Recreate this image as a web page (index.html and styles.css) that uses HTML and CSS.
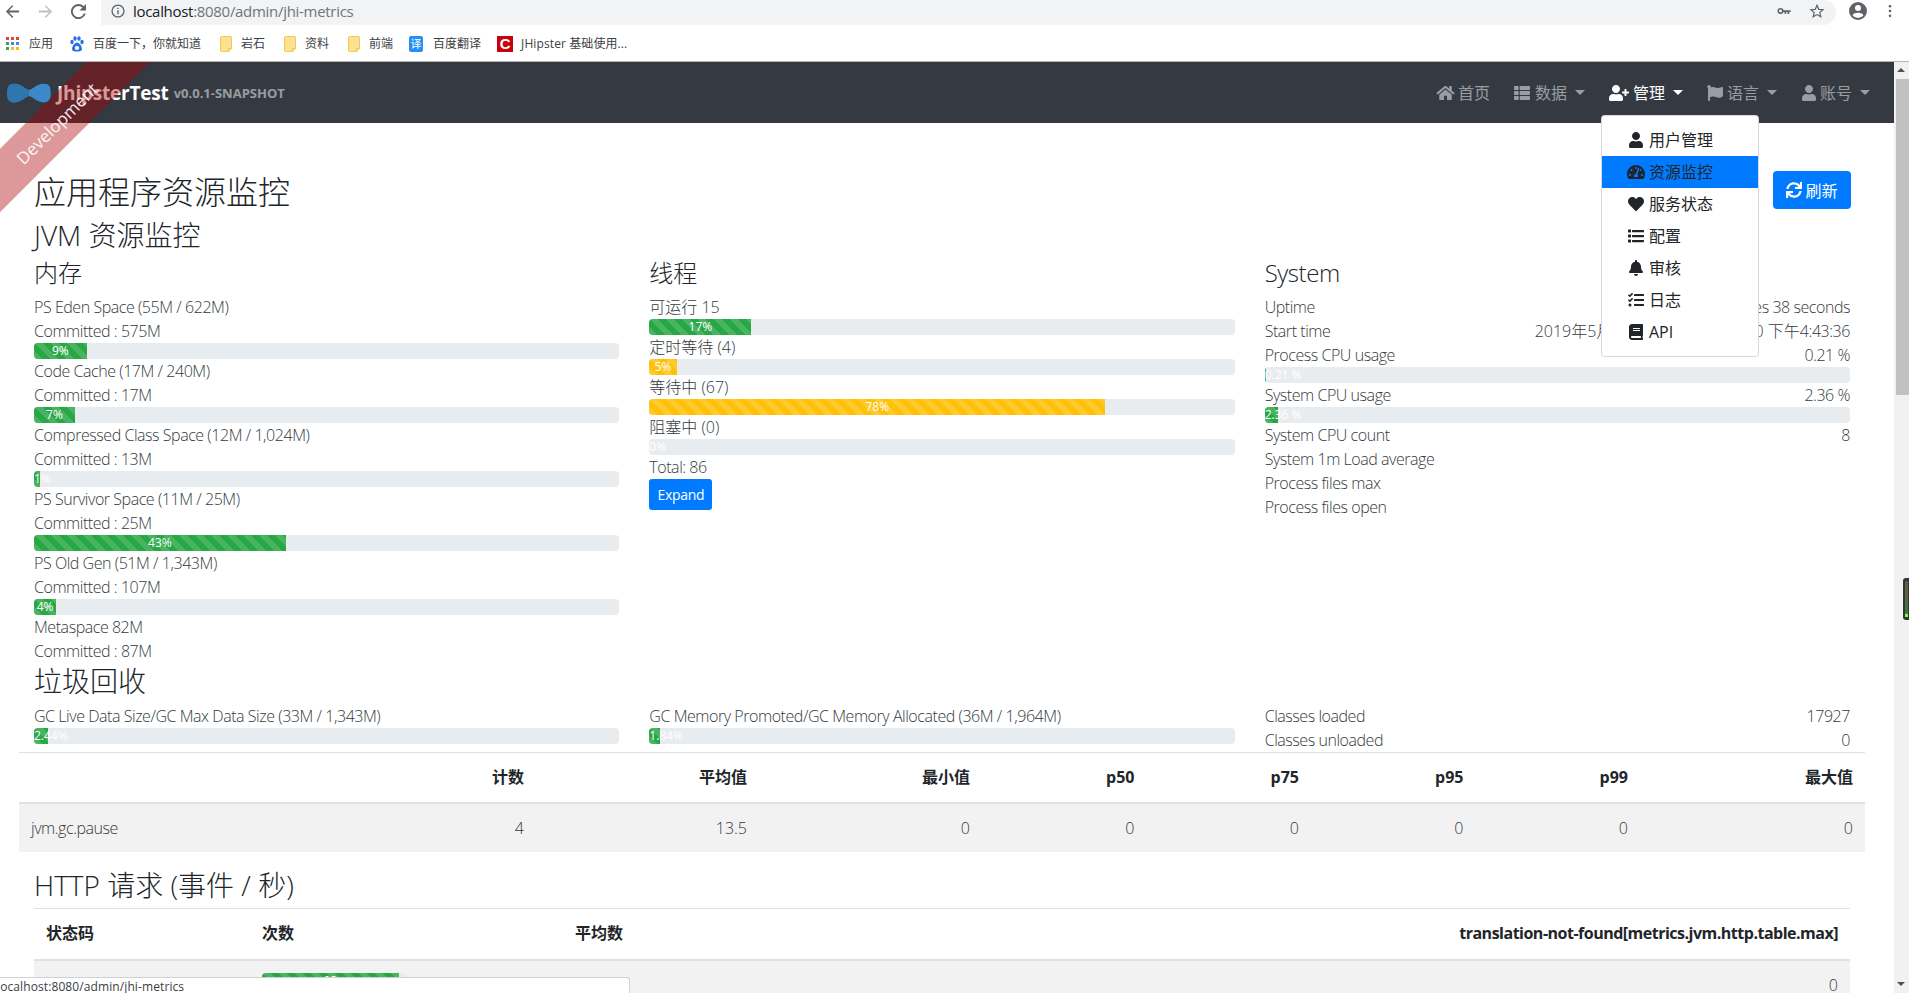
FILE: index.html
```html
<!DOCTYPE html>
<html lang="zh-CN">
<head>
<meta charset="utf-8">
<title>应用程序资源监控</title>
<link rel="stylesheet" href="styles.css">
</head>
<body>
<svg class="sprite" xmlns="http://www.w3.org/2000/svg">
  <symbol id="i-user" viewBox="0 0 448 512"><path d="M224 256c70.7 0 128-57.3 128-128S294.7 0 224 0 96 57.3 96 128s57.3 128 128 128zm89.6 32h-16.7c-22.2 10.2-46.9 16-72.9 16s-50.6-5.8-72.9-16h-16.7C60.2 288 0 348.2 0 422.4V464c0 26.5 21.5 48 48 48h352c26.5 0 48-21.5 48-48v-41.6c0-74.2-60.2-134.4-134.4-134.4z"/></symbol>
  <symbol id="i-heart" viewBox="0 0 512 512"><path d="M462.3 62.6C407.5 15.9 326 24.3 275.7 76.2L256 96.5l-19.7-20.3C186.1 24.3 104.5 15.9 49.7 62.6c-62.8 53.6-66.1 149.8-9.9 207.9l193.5 199.8c12.5 12.9 32.8 12.9 45.3 0l193.5-199.8c56.3-58.1 53-154.3-9.8-207.9z"/></symbol>
  <symbol id="i-list" viewBox="0 0 512 512"><path d="M128 116V76c0-8.837 7.164-16 16-16h352c8.836 0 16 7.163 16 16v40c0 8.837-7.164 16-16 16H144c-8.836 0-16-7.163-16-16zm16 176h352c8.836 0 16-7.163 16-16v-40c0-8.837-7.164-16-16-16H144c-8.836 0-16 7.163-16 16v40c0 8.837 7.164 16 16 16zm0 160h352c8.836 0 16-7.163 16-16v-40c0-8.837-7.164-16-16-16H144c-8.836 0-16 7.163-16 16v40c0 8.837 7.164 16 16 16zM16 144h64c8.836 0 16-7.163 16-16V64c0-8.837-7.164-16-16-16H16C7.164 48 0 55.163 0 64v64c0 8.837 7.164 16 16 16zm0 160h64c8.836 0 16-7.163 16-16v-64c0-8.837-7.164-16-16-16H16c-8.836 0-16 7.163-16 16v64c0 8.837 7.164 16 16 16zm0 160h64c8.836 0 16-7.163 16-16v-64c0-8.837-7.164-16-16-16H16c-8.836 0-16 7.163-16 16v64c0 8.837 7.164 16 16 16z"/></symbol>
  <symbol id="i-bell" viewBox="0 0 448 512"><path d="M224 512c35.32 0 63.97-28.65 63.97-64H160.03c0 35.35 28.65 64 63.97 64zm215.39-149.71c-19.32-20.76-55.47-51.99-55.47-154.29 0-77.7-54.48-139.9-127.94-155.16V32c0-17.67-14.32-32-31.98-32s-31.98 14.33-31.98 32v20.84C118.56 68.1 64.08 130.3 64.08 208c0 102.3-36.15 133.53-55.47 154.29-6 6.45-8.66 14.16-8.61 21.71.11 16.4 12.98 32 32.1 32h383.8c19.12 0 32-15.6 32.1-32 .05-7.55-2.61-15.27-8.61-21.71z"/></symbol>
  <symbol id="i-home" viewBox="0 0 576 512"><path d="M488 312.7V456c0 13.3-10.7 24-24 24H348c-6.6 0-12-5.4-12-12V356c0-6.6-5.4-12-12-12h-72c-6.6 0-12 5.4-12 12v112c0 6.6-5.4 12-12 12H112c-13.3 0-24-10.7-24-24V312.7c0-3.6 1.6-7 4.4-9.3l188-154.8c4.4-3.6 10.8-3.6 15.3 0l188 154.8c2.7 2.3 4.3 5.7 4.3 9.3zm83.6-60.9L488 182.9V44.4c0-6.6-5.4-12-12-12h-56c-6.6 0-12 5.4-12 12V117l-89.5-73.7c-17.7-14.6-43.3-14.6-61 0L4.4 251.8c-5.1 4.2-5.8 11.8-1.6 16.9l25.5 31c4.2 5.1 11.8 5.8 16.9 1.6l235.2-193.7c4.4-3.6 10.8-3.6 15.3 0l235.2 193.7c5.1 4.2 12.7 3.5 16.9-1.6l25.5-31c4.2-5.2 3.4-12.7-1.8-16.9z"/></symbol>
  <symbol id="i-th" viewBox="0 0 512 512"><path d="M149.333 216v80c0 13.255-10.745 24-24 24H24c-13.255 0-24-10.745-24-24v-80c0-13.255 10.745-24 24-24h101.333c13.255 0 24 10.745 24 24zM0 376v80c0 13.255 10.745 24 24 24h101.333c13.255 0 24-10.745 24-24v-80c0-13.255-10.745-24-24-24H24c-13.255 0-24 10.745-24 24zM125.333 32H24C10.745 32 0 42.745 0 56v80c0 13.255 10.745 24 24 24h101.333c13.255 0 24-10.745 24-24V56c0-13.255-10.745-24-24-24zm80 448H488c13.255 0 24-10.745 24-24v-80c0-13.255-10.745-24-24-24H205.333c-13.255 0-24 10.745-24 24v80c0 13.255 10.745 24 24 24zm-24-424v80c0 13.255 10.745 24 24 24H488c13.255 0 24-10.745 24-24V56c0-13.255-10.745-24-24-24H205.333c-13.255 0-24 10.745-24 24zm24 264H488c13.255 0 24-10.745 24-24v-80c0-13.255-10.745-24-24-24H205.333c-13.255 0-24 10.745-24 24v80c0 13.255 10.745 24 24 24z"/></symbol>
  <symbol id="i-userplus" viewBox="0 0 640 512"><path d="M624 208h-64v-64c0-8.8-7.2-16-16-16h-32c-8.8 0-16 7.2-16 16v64h-64c-8.8 0-16 7.2-16 16v32c0 8.8 7.2 16 16 16h64v64c0 8.8 7.2 16 16 16h32c8.8 0 16-7.2 16-16v-64h64c8.8 0 16-7.2 16-16v-32c0-8.8-7.2-16-16-16zm-400 48c70.7 0 128-57.3 128-128S294.7 0 224 0 96 57.3 96 128s57.3 128 128 128zm89.6 32h-16.7c-22.2 10.2-46.9 16-72.9 16s-50.6-5.8-72.9-16h-16.7C60.2 288 0 348.2 0 422.4V464c0 26.5 21.5 48 48 48h352c26.5 0 48-21.5 48-48v-41.6c0-74.2-60.2-134.4-134.4-134.4z"/></symbol>
  <symbol id="i-flag" viewBox="0 0 512 512"><path d="M349.565 98.783C295.978 98.783 251.721 64 184.348 64c-24.955 0-47.309 4.384-68.045 12.013a55.947 55.947 0 0 0 3.586-23.562C118.117 24.015 94.806 1.206 66.338.048 34.345-1.254 8 24.296 8 56c0 19.026 9.497 35.825 24 45.945V488c0 13.255 10.745 24 24 24h16c13.255 0 24-10.745 24-24v-94.4c28.311-12.064 63.582-22.122 114.435-22.122 53.588 0 97.844 34.783 165.217 34.783 48.169 0 86.667-16.294 122.505-40.858C506.84 359.452 512 349.571 512 339.045v-243.1c0-23.393-24.269-38.87-45.485-29.016-34.338 15.948-76.454 31.854-116.95 31.854z"/></symbol>
  <symbol id="i-sync" viewBox="0 0 512 512"><path d="M440.65 12.57l4 82.77A247.16 247.16 0 0 0 255.83 8C134.73 8 33.91 94.92 12.29 209.82A12 12 0 0 0 24.09 224h49.05a12 12 0 0 0 11.67-9.26 175.91 175.91 0 0 1 317-56.94l-101.46-4.86a12 12 0 0 0-12.57 12v47.41a12 12 0 0 0 12 12H500a12 12 0 0 0 12-12V12a12 12 0 0 0-12-12h-47.37a12 12 0 0 0-11.98 12.57zM255.83 432a175.61 175.61 0 0 1-146-77.8l101.8 4.87a12 12 0 0 0 12.57-12v-47.4a12 12 0 0 0-12-12H12a12 12 0 0 0-12 12V500a12 12 0 0 0 12 12h47.35a12 12 0 0 0 12-12.6l-4.15-82.57A247.17 247.17 0 0 0 255.83 504c121.11 0 221.93-86.92 243.55-201.82a12 12 0 0 0-11.8-14.18h-49.05a12 12 0 0 0-11.67 9.26A175.86 175.86 0 0 1 255.83 432z"/></symbol>
  <symbol id="i-book" viewBox="0 0 448 512"><path d="M448 360V24c0-13.3-10.7-24-24-24H96C43 0 0 43 0 96v320c0 53 43 96 96 96h328c13.3 0 24-10.7 24-24v-16c0-7.5-3.5-14.3-8.9-18.7-4.2-15.4-4.2-59.3 0-74.7 5.4-4.3 8.9-11.1 8.9-18.6zM128 134c0-3.3 2.7-6 6-6h212c3.3 0 6 2.7 6 6v20c0 3.3-2.7 6-6 6H134c-3.3 0-6-2.7-6-6v-20zm0 64c0-3.3 2.7-6 6-6h212c3.3 0 6 2.7 6 6v20c0 3.3-2.7 6-6 6H134c-3.3 0-6-2.7-6-6v-20zm253.4 250H96c-17.7 0-32-14.3-32-32 0-17.6 14.4-32 32-32h285.4c-1.9 17.1-1.9 46.9 0 64z"/></symbol>
  <symbol id="i-tasks" viewBox="0 0 512 512"><path d="M139.61 35.5a12 12 0 0 0-17 0L58.93 98.81l-22.7-22.12a12 12 0 0 0-17 0L3.53 92.41a12 12 0 0 0 0 17l47.59 47.4a12.78 12.78 0 0 0 17.61 0l15.59-15.62L156.52 69a12.09 12.09 0 0 0 .09-17zm0 159.19a12 12 0 0 0-17 0l-63.68 63.72-22.7-22.1a12 12 0 0 0-17 0L3.53 252a12 12 0 0 0 0 17L51 316.5a12.77 12.77 0 0 0 17.6 0l15.7-15.69 72.2-72.22a12 12 0 0 0 .09-16.9zM64 368c-26.49 0-48.59 21.5-48.59 48S37.53 464 64 464a48 48 0 0 0 0-96zm432 16H208a16 16 0 0 0-16 16v32a16 16 0 0 0 16 16h288a16 16 0 0 0 16-16v-32a16 16 0 0 0-16-16zm0-320H208a16 16 0 0 0-16 16v32a16 16 0 0 0 16 16h288a16 16 0 0 0 16-16V80a16 16 0 0 0-16-16zm0 160H208a16 16 0 0 0-16 16v32a16 16 0 0 0 16 16h288a16 16 0 0 0 16-16v-32a16 16 0 0 0-16-16z"/></symbol>
  <symbol id="i-tach" viewBox="0 0 576 512"><path d="M288 32C128.94 32 0 160.94 0 320c0 52.8 14.25 102.26 39.06 144.8 5.61 9.62 16.3 15.2 27.44 15.2h443c11.14 0 21.83-5.58 27.44-15.2C561.75 422.26 576 372.8 576 320c0-159.06-128.94-288-288-288zm0 64c14.71 0 26.58 10.13 30.32 23.65-1.11 2.26-2.64 4.23-3.45 6.67l-9.22 27.67c-5.13 3.49-10.97 6.01-17.64 6.01-17.67 0-32-14.33-32-32S270.33 96 288 96zM96 384c-17.67 0-32-14.33-32-32s14.33-32 32-32 32 14.33 32 32-14.33 32-32 32zm48-160c-17.67 0-32-14.33-32-32s14.33-32 32-32 32 14.33 32 32-14.33 32-32 32zm246.77-72.41l-61.33 184C343.13 347.33 352 364.54 352 384c0 11.72-3.38 22.55-8.88 32H232.88c-5.5-9.45-8.88-20.28-8.88-32 0-33.94 26.5-61.43 59.9-63.59l61.34-184.01c4.17-12.56 17.73-19.45 30.36-15.17 12.57 4.19 19.35 17.77 15.17 30.36zm14.66 57.2l15.52-46.55c3.47-1.29 7.13-2.23 11.05-2.23 17.67 0 32 14.33 32 32s-14.33 32-32 32c-11.38-.01-20.89-6.28-26.57-15.22zM480 384c-17.67 0-32-14.33-32-32s14.33-32 32-32 32 14.33 32 32-14.33 32-32 32z"/></symbol>
  <symbol id="i-folder" viewBox="0 0 12 16"><path d="M1.500.5h9a1 1 0 0 1 1 1v11l-3 3h-7a1 1 0 0 1-1-1v-13a1 1 0 0 1 1-1z" fill="#fde293" stroke="#f0c94e"/><path d="M8.500 15.500v-3h3" fill="none" stroke="#f0c94e"/></symbol>
</svg>

<header class="chrome">
  <div class="toolbar">
    <svg class="tb-btn" viewBox="0 0 16 16"><path d="M15 7H4.200l4.600-4.600L7.700 1.200 1 8l6.700 6.800 1.100-1.200L4.200 9H15z" fill="#5f6368"/></svg>
    <svg class="tb-btn" viewBox="0 0 16 16"><path d="M1 7h10.800L7.200 2.400l1.100-1.200L15 8l-6.700 6.800-1.100-1.200L11.800 9H1z" fill="#bdc1c6"/></svg>
    <svg class="tb-btn" viewBox="0 0 16 16"><path d="M13.600 2.400A8 8 0 1 0 15.700 10h-2.100a6 6 0 1 1-1.400-6.200L9 7h7V0z" fill="#5f6368"/></svg>
    <div class="omnibox">
      <svg class="tb-info" viewBox="0 0 16 16"><circle cx="8" cy="8" r="6.800" fill="none" stroke="#5f6368" stroke-width="1.500"/><path d="M7.200 7h1.600v4.600H7.200zM7.200 4.200h1.600v1.600H7.200z" fill="#5f6368"/></svg>
      <span class="url"><span class="url-host">localhost</span>:8080/admin/jhi-metrics</span>
      <span class="spacer"></span>
      <svg class="tb-key" viewBox="0 0 16 8"><circle cx="4" cy="4" r="2.600" fill="none" stroke="#5f6368" stroke-width="1.800"/><path d="M6.500 3h9v2h-1.500v2.400h-2V5h-1.500v2h-2V5h-2z" fill="#5f6368"/></svg>
      <svg class="tb-star" viewBox="0 0 24 24"><path d="M12 3.500l2.600 6 6.500.6-4.900 4.300 1.500 6.400L12 17.400l-5.700 3.400 1.500-6.400L2.900 10.100l6.500-.6z" fill="none" stroke="#5f6368" stroke-width="1.800"/></svg>
    </div>
    <svg class="tb-acc" viewBox="0 0 18 18"><path fill-rule="evenodd" d="M9 0a9 9 0 1 0 0 18A9 9 0 0 0 9 0zm0 3a3 3 0 1 1 0 6 3 3 0 0 1 0-6zm0 13a7 7 0 0 1-5.500-2.800C4.300 11.500 7 10.800 9 10.800s4.700.7 5.500 2.400A7 7 0 0 1 9 16z" fill="#5f6368"/></svg>
    <svg class="tb-dots" viewBox="0 0 4 16"><circle cx="2" cy="2.500" r="1.500" fill="#5f6368"/><circle cx="2" cy="8" r="1.500" fill="#5f6368"/><circle cx="2" cy="13.500" r="1.500" fill="#5f6368"/></svg>
  </div>
  <nav class="bookmarks">
    <a class="bm bm-apps"><svg class="bm-ico" viewBox="0 0 14 14"><g><rect x="0" y="0" width="3" height="3" fill="#ea4335"/><rect x="5" y="0" width="3" height="3" fill="#ea4335"/><rect x="10" y="0" width="3" height="3" fill="#ea4335"/><rect x="0" y="5" width="3" height="3" fill="#34a853"/><rect x="5" y="5" width="3" height="3" fill="#4285f4"/><rect x="10" y="5" width="3" height="3" fill="#4285f4"/><rect x="0" y="10" width="3" height="3" fill="#34a853"/><rect x="5" y="10" width="3" height="3" fill="#fbbc04"/><rect x="10" y="10" width="3" height="3" fill="#fbbc04"/></g></svg>应用</a>
    <a class="bm bm-baidu"><svg class="bm-ico" viewBox="0 0 14 16"><g fill="#2f6fe4"><ellipse cx="2" cy="6" rx="1.700" ry="2.200"/><ellipse cx="5" cy="2.500" rx="1.700" ry="2.300"/><ellipse cx="9" cy="2.500" rx="1.700" ry="2.300"/><ellipse cx="12" cy="6" rx="1.700" ry="2.200"/><path d="M7 6.500c2.500 0 5 4 5 6.500 0 2-2 2.500-5 2.500S2 15 2 13c0-2.500 2.500-6.500 5-6.500z"/></g><ellipse cx="7" cy="12" rx="2.200" ry="2" fill="#fff"/></svg>百度一下，你就知道</a>
    <a class="bm bm-f"><svg class="bm-folder"><use href="#i-folder"/></svg>岩石</a>
    <a class="bm bm-f"><svg class="bm-folder"><use href="#i-folder"/></svg>资料</a>
    <a class="bm bm-f"><svg class="bm-folder"><use href="#i-folder"/></svg>前端</a>
    <a class="bm bm-tr"><span class="ico-tr">译</span>百度翻译</a>
    <a class="bm bm-c"><span class="ico-c">C</span><span class="bm-jh">JHipster 基础使用...</span></a>
  </nav>
</header>

<div class="viewport">
  <div class="page">
    <div class="ribbon"><span class="ribbon-text">Development</span></div>
    <div class="navbar">
      <a class="brand">
        <svg class="logo" viewBox="0 0 44 20"><path d="M1 4C2 1 6 0 10 1c5 1 8 5 12 6 4-1 7-5 12-6 4-1 8 0 9 3 1 4 1 9 0 12-1 3-5 4-9 3-5-1-8-5-12-6-4 1-7 5-12 6-4 1-8 0-9-3C0 13 0 8 1 4z" fill="#3b89c9"/><path d="M1 4C2 1 6 0 10 1c5 1 8 5 12 6v6c-4 1-7 5-12 6-4 1-8 0-9-3C0 13 0 8 1 4z" fill="#2f75ae"/></svg>
        <span class="brand-name">JhipsterTest</span>
        <span class="brand-ver">v0.0.1-SNAPSHOT</span>
      </a>
      <ul class="nav-items">
        <li class="nav-item ni-home"><svg class="fa fa-home"><use href="#i-home"/></svg><span>首页</span></li>
        <li class="nav-item ni-data"><svg class="fa fa-th"><use href="#i-th"/></svg><span>数据</span><i class="caret"></i></li>
        <li class="nav-item active ni-admin"><svg class="fa fa-up"><use href="#i-userplus"/></svg><span>管理</span><i class="caret"></i>
          <ul class="menu">
            <li class="menu-item"><span class="fw"><svg class="fa m-user"><use href="#i-user"/></svg></span>用户管理</li>
            <li class="menu-item current"><span class="fw"><svg class="fa m-tach"><use href="#i-tach"/></svg></span>资源监控</li>
            <li class="menu-item"><span class="fw"><svg class="fa m-heart"><use href="#i-heart"/></svg></span>服务状态</li>
            <li class="menu-item"><span class="fw"><svg class="fa m-list"><use href="#i-list"/></svg></span>配置</li>
            <li class="menu-item"><span class="fw"><svg class="fa m-bell"><use href="#i-bell"/></svg></span>审核</li>
            <li class="menu-item"><span class="fw"><svg class="fa m-tasks"><use href="#i-tasks"/></svg></span>日志</li>
            <li class="menu-item"><span class="fw"><svg class="fa m-book"><use href="#i-book"/></svg></span>API</li>
          </ul>
        </li>
        <li class="nav-item ni-lang"><svg class="fa fa-flag"><use href="#i-flag"/></svg><span>语言</span><i class="caret"></i></li>
        <li class="nav-item ni-acc"><svg class="fa fa-user"><use href="#i-user"/></svg><span>账号</span><i class="caret"></i></li>
      </ul>
    </div>

    <main class="content">
      <div class="title-row">
        <h2 class="h-page">应用程序资源监控</h2>
        <button class="btn btn-refresh"><svg class="fa fa-sync"><use href="#i-sync"/></svg>刷新</button>
      </div>
      <h3 class="h-sec">JVM 资源监控</h3>
      <div class="row">
        <section class="col">
          <h4 class="h-col">内存</h4>
          <div class="line lat">PS Eden Space (55M / 622M)</div>
          <div class="line lat">Committed : 575M</div>
          <div class="track"><div class="bar ok" style="width:9%">9%</div></div>
          <div class="line lat">Code Cache (17M / 240M)</div>
          <div class="line lat">Committed : 17M</div>
          <div class="track"><div class="bar ok" style="width:7%">7%</div></div>
          <div class="line lat">Compressed Class Space (12M / 1,024M)</div>
          <div class="line lat">Committed : 13M</div>
          <div class="track"><div class="bar ok" style="width:1%">1%</div></div>
          <div class="line lat">PS Survivor Space (11M / 25M)</div>
          <div class="line lat">Committed : 25M</div>
          <div class="track"><div class="bar ok" style="width:43%">43%</div></div>
          <div class="line lat">PS Old Gen (51M / 1,343M)</div>
          <div class="line lat">Committed : 107M</div>
          <div class="track"><div class="bar ok" style="width:3.8%">4%</div></div>
          <div class="line lat">Metaspace 82M</div>
          <div class="line lat">Committed : 87M</div>
        </section>
        <section class="col">
          <h4 class="h-col">线程</h4>
          <div class="line">可运行 15</div>
          <div class="track"><div class="bar ok" style="width:17.44%">17%</div></div>
          <div class="line">定时等待 (4)</div>
          <div class="track"><div class="bar warn" style="width:4.65%">5%</div></div>
          <div class="line">等待中 (67)</div>
          <div class="track"><div class="bar warn" style="width:77.9%">78%</div></div>
          <div class="line">阻塞中 (0)</div>
          <div class="track"><div class="bar ok" style="width:0">0%</div></div>
          <div class="line lat">Total: 86</div>
          <button class="btn btn-sm">Expand</button>
        </section>
        <section class="col">
          <h4 class="h-col lat">System</h4>
          <div class="line split lat"><span>Uptime</span><span>12 minutes 38 seconds</span></div>
          <div class="line split"><span class="lat">Start time</span><span>2019年5月30日,&nbsp; GMT+08:00:00 下午<span class="lat">4:43:36</span></span></div>
          <div class="line split lat"><span>Process CPU usage</span><span>0.21 %</span></div>
          <div class="track"><div class="bar ok" style="width:.21%">0.21 %</div></div>
          <div class="line split lat"><span>System CPU usage</span><span>2.36 %</span></div>
          <div class="track"><div class="bar ok" style="width:2.36%">2.36 %</div></div>
          <div class="line split lat"><span>System CPU count</span><span>8</span></div>
          <div class="line lat">System 1m Load average</div>
          <div class="line lat">Process files max</div>
          <div class="line lat">Process files open</div>
        </section>
      </div>
      <h3 class="h-sec">垃圾回收</h3>
      <div class="row">
        <section class="col">
          <div class="line lat">GC Live Data Size/GC Max Data Size (33M / 1,343M)</div>
          <div class="track"><div class="bar ok" style="width:2.44%">2.44%</div></div>
        </section>
        <section class="col">
          <div class="line lat">GC Memory Promoted/GC Memory Allocated (36M / 1,964M)</div>
          <div class="track"><div class="bar ok" style="width:1.84%">1.84%</div></div>
        </section>
        <section class="col">
          <div class="line split lat"><span>Classes loaded</span><span>17927</span></div>
          <div class="line split lat"><span>Classes unloaded</span><span>0</span></div>
        </section>
      </div>
      <table class="tbl tbl-gc">
        <colgroup><col class="g0"><col class="g1"><col class="g1"><col class="g1"><col class="g2"><col class="g2"><col class="g2"><col class="g2"><col class="g3"></colgroup>
        <thead><tr><th></th><th>计数</th><th>平均值</th><th>最小值</th><th>p50</th><th>p75</th><th>p95</th><th>p99</th><th>最大值</th></tr></thead>
        <tbody><tr class="stripe"><td class="left lat">jvm.gc.pause</td><td>4</td><td>13.5</td><td>0</td><td>0</td><td>0</td><td>0</td><td>0</td><td>0</td></tr></tbody>
      </table>
      <h3 class="h-http">HTTP 请求 (事件 / 秒)</h3>
      <table class="tbl tbl-http">
        <colgroup><col class="h0"><col class="h1"><col class="h2"><col></colgroup>
        <thead><tr><th class="left">状态码</th><th class="left">次数</th><th>平均数</th><th class="th-tight">translation-not-found[metrics.jvm.http.table.max]</th></tr></thead>
        <tbody><tr class="stripe"><td class="left">200</td><td class="left"><div class="track"><div class="bar ok" style="width:95%">93</div></div></td><td>19.23</td><td>0</td></tr></tbody>
      </table>
    </main>
  </div>
  <aside class="scrollbar">
    <i class="sb-up"></i>
    <div class="sb-thumb"></div>
    <span class="spacer"></span>
    <i class="sb-down"></i>
    <div class="sb-handle"></div>
  </aside>
  <div class="status-bubble">localhost:8080/admin/jhi-metrics</div>
</div>
</body>
</html>
```

FILE: styles.css
```css
* { box-sizing: border-box; }
html, body { margin: 0; height: 100%; overflow: hidden; }
body {
  width: 1909px;
  height: 993px;
  display: flex;
  flex-direction: column;
  background: #fff;
  color: #212529;
  font-family: "Open Sans", "Noto Sans CJK SC", sans-serif;
  font-size: 16px;
  font-weight: 300;
  line-height: 24px;
}
.sprite { display: none; }
.spacer { flex: 1; }
ul { list-style: none; margin: 0; padding: 0; }

/* browser chrome */
.chrome { height: 62px; flex: none; border-bottom: 1px solid #b4b4b4; background: #fff; font-weight: 400; }
.toolbar { height: 25px; display: flex; align-items: center; padding-left: 5px; }
.tb-btn { width: 15px; height: 15px; margin-right: 18px; margin-top: -3px; }
.omnibox {
  width: 1735px; height: 25px; margin-left: -3px;
  background: #f1f3f4; border-radius: 0 14px 14px 0;
  display: flex; align-items: center; padding: 0 11px 3px 10px;
}
.tb-info { width: 14px; height: 14px; margin-right: 8px; }
.url { font-size: 15px; color: #70757a; letter-spacing: -.3px; font-family: "Open Sans", sans-serif; margin-top: -1px; }
.url-host { color: #202124; }
.tb-key { width: 14px; height: 8px; margin-right: 18px; }
.tb-star { width: 16px; height: 16px; }
.tb-acc { width: 18px; height: 18px; margin-left: 13px; margin-top: -3px; }
.tb-dots { width: 4px; height: 14px; margin-left: 21px; margin-top: -3px; }

.bookmarks { height: 36px; padding-top: 1px; display: flex; align-items: center; font-size: 12px; color: #3c4043; }
.bm { display: flex; align-items: center; white-space: nowrap; }
.bm-apps { margin-left: 6px; }
.bm-ico { width: 14px; height: 14px; margin-right: 9px; }
.bm-baidu { margin-left: 17px; }
.bm-baidu .bm-ico { height: 16px; }
.bm-f { margin-left: 19px; }
.bm-folder { width: 12px; height: 16px; margin-right: 9px; }
.bm-tr { margin-left: 16px; }
.ico-tr { width: 14px; height: 16px; margin-right: 10px; background: #2490f2; color: #fff; border-radius: 2px; font-size: 11px; display: flex; align-items: center; justify-content: center; }
.bm-c { margin-left: 16px; }
.ico-c { width: 16px; height: 16px; margin-right: 8px; background: #c7000b; color: #fff; font: 700 15px/16px "Liberation Sans", sans-serif; text-align: center; }
.bm-jh { letter-spacing: .1px; }

/* page viewport */
.viewport { flex: 1; min-height: 0; display: flex; position: relative; overflow: hidden; }
.page { flex: 1; min-width: 0; position: relative; overflow: hidden; background: #fff; }

.ribbon {
  position: absolute; left: -98px; top: 44px; width: 300px; height: 45px; padding-left: 14px;
  background: rgba(170, 0, 0, .4); transform: rotate(-45deg); z-index: 5;
  color: #fff; font-size: 17px; font-weight: 400; line-height: 45px; text-align: center; pointer-events: none;
}
.ribbon-text { opacity: .9; }

.navbar {
  height: 61px; background: #353a42; display: flex; align-items: center; justify-content: space-between;
  padding: 0 24px 0 7px;
}
.brand { display: flex; align-items: center; }
.logo { width: 44px; height: 20px; margin-right: 6px; }
.brand-name { color: #fff; font-weight: 700; font-size: 19px; letter-spacing: -.2px; }
.brand-ver { color: rgba(255, 255, 255, .5); font-weight: 700; font-size: 13px; margin-left: 5px; }
.nav-items { display: flex; align-items: center; }
.nav-item { display: flex; align-items: center; color: rgba(255, 255, 255, .5); font-weight: 400; position: relative; height: 40px; margin-left: 24px; }
.nav-item.active { color: #fff; }
.ni-acc { margin-left: 25px; }
.fa { display: block; fill: currentColor; }
.fa-home { width: 19px; height: 16px; margin-right: 3px; }
.fa-th { width: 16px; height: 16px; margin-right: 5px; }
.fa-up { width: 20px; height: 16px; margin-right: 4px; }
.fa-flag { width: 16px; height: 16px; margin-right: 4px; }
.fa-user { width: 14px; height: 16px; margin-right: 4px; }
.caret { width: 0; height: 0; margin-left: 8px; border-top: 5px solid currentColor; border-left: 5px solid transparent; border-right: 5px solid transparent; }

.menu {
  position: absolute; top: 42px; left: -8px; width: 158px; padding: 8px 0; z-index: 10;
  background: #fff; border: 1px solid rgba(0, 0, 0, .15); border-radius: 4px; color: #212529;
}
.menu-item { height: 32px; padding: 4px 24px; display: flex; align-items: center; }
.menu-item.current { background: #007bff; }
.fw { width: 20px; margin-right: 3px; display: flex; justify-content: center; }
.m-user, .m-bell { width: 14px; height: 16px; }
.m-tach { width: 18px; height: 16px; }
.m-heart, .m-list, .m-tasks { width: 16px; height: 16px; }
.m-book { width: 14px; height: 16px; }

/* content */
.content { padding: 0 44px 0 34px; }
.lat { letter-spacing: -.45px; }
.title-row { display: flex; justify-content: space-between; align-items: flex-start; padding-top: 48px; margin-bottom: 8.5px; margin-right: -1px; }
h2, h3, h4 { margin: 0; font-weight: 300; line-height: 1.2; color: #212529; }
.h-page { font-size: 32px; line-height: 38px; margin-top: 1.5px; }
.h-sec { font-size: 28px; margin-top: 2px; margin-bottom: 5px; }
.h-col { font-size: 24px; margin-top: 1px; margin-bottom: 8px; }
.btn { border: 0; background: #007bff; color: #fff; font-family: inherit; font-weight: 400; display: flex; align-items: center; justify-content: center; }
.btn-refresh { width: 78px; height: 38px; border-radius: 4px; font-size: 16px; }
.fa-sync { width: 16px; height: 16px; margin-right: 3px; }
.btn-sm { width: 63px; height: 31px; border-radius: 3px; font-size: 14px; letter-spacing: -.3px; }

.row { display: grid; grid-template-columns: repeat(3, 1fr); gap: 30px; }
.line { height: 24px; white-space: nowrap; color: #343a40; }
.split { display: flex; justify-content: space-between; }
.track { height: 16px; background: #e9ecef; border-radius: 4px; overflow: hidden; }
.bar {
  height: 16px; color: #fff; font-size: 12px; font-weight: 400; line-height: 16px; text-align: center; white-space: nowrap;
  background-image: linear-gradient(45deg, rgba(255,255,255,.15) 25%, transparent 25%, transparent 50%, rgba(255,255,255,.15) 50%, rgba(255,255,255,.15) 75%, transparent 75%, transparent);
  background-size: 16px 16px;
}
.ok { background-color: #28a745; }
.warn { background-color: #ffc107; }

.tbl { table-layout: fixed; border-collapse: collapse; }
.tbl th, .tbl td { padding: 12px; text-align: right; vertical-align: top; border-top: 1px solid #dee2e6; height: 49px; color: #343a40; }
.tbl th { font-weight: 700; color: #212529; border-bottom: 2px solid #dee2e6; height: 51px; }
.tbl .left { text-align: left; }
.tbl .th-tight { letter-spacing: -.5px; }
.tbl-gc { width: 1846px; margin: 0 -15px; }
.g0 { width: 294px; }
.g1 { width: 223px; }
.g2 { width: 164.5px; }
.g3 { width: 225px; }
.stripe td { background: #f2f2f2; }
.h-http { font-size: 28px; margin: 17px 0 5px; }
.tbl-http { width: 1816px; }
.h0 { width: 216px; }
.h1 { width: 168px; }
.h2 { width: 217px; }

/* scrollbar */
.scrollbar { width: 15px; flex: none; background: #f1f1f1; display: flex; flex-direction: column; align-items: stretch; position: relative; }
.sb-up, .sb-down { height: 17px; flex: none; position: relative; }
.sb-up::after, .sb-down::after { content: ""; position: absolute; left: 3px; top: 6px; border-left: 4px solid transparent; border-right: 4px solid transparent; }
.sb-up::after { border-bottom: 4px solid #505050; }
.sb-down::after { border-top: 4px solid #505050; }
.sb-thumb { height: 316px; background: #c1c1c1; margin-left: 2px; }
.sb-handle { position: absolute; right: 0; top: 516px; width: 6px; height: 42px; background: #2f3539; border-radius: 3px 0 0 3px; }
.sb-handle::after { content: ""; position: absolute; left: 2px; top: 3px; width: 3px; height: 36px; background: linear-gradient(#6e5a3e, #4d6a44 60%, #3f7a3a 90%, #7dff2a 92%); }

.status-bubble {
  position: absolute; left: 0; bottom: 0; width: 630px; height: 16px; z-index: 20;
  background: #fff; border: 1px solid #d0d0d0; border-left: 0; border-bottom: 0; border-radius: 0 3px 0 0;
  font-size: 12px; line-height: 17px; text-indent: -3px; letter-spacing: .1px; color: #3c4043; font-weight: 400; white-space: nowrap; overflow: hidden;
}
```
